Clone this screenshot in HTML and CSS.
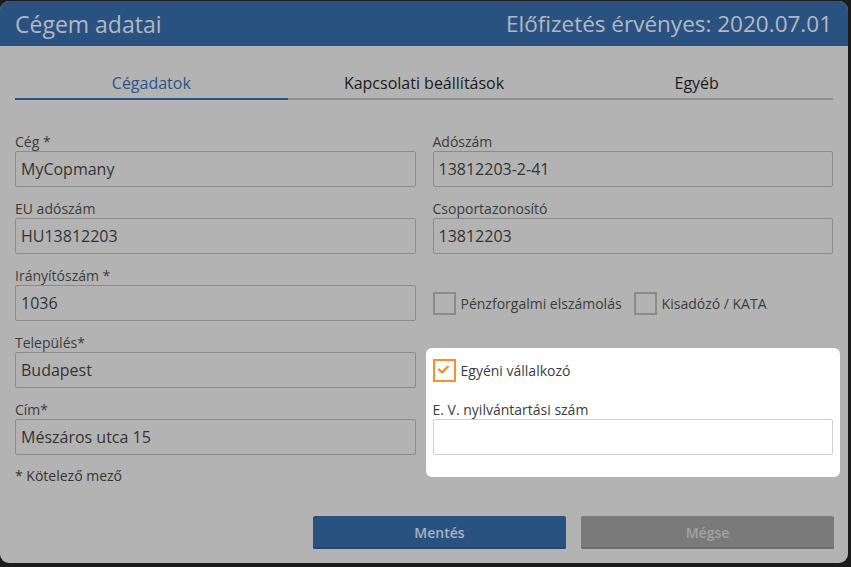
FILE: index.html
```html
<!DOCTYPE html>
<html lang="hu">
<head>
<meta charset="utf-8">
<title>Cégem adatai</title>
<link rel="stylesheet" href="styles.css">
</head>
<body>
<div class="dialog">
  <header class="dlg-head">
    <h1 class="title">Cégem adatai</h1>
    <div class="sub">Előfizetés érvényes: 2020.07.01</div>
  </header>
  <div class="dlg-body">
    <nav class="tabs">
      <div class="tab active">Cégadatok</div>
      <div class="tab">Kapcsolati beállítások</div>
      <div class="tab">Egyéb</div>
    </nav>
    <div class="form">
      <div class="col">
        <div class="field">
          <div class="label">Cég *</div>
          <div class="input">MyCopmany</div>
        </div>
        <div class="field">
          <div class="label">EU adószám</div>
          <div class="input">HU13812203</div>
        </div>
        <div class="field">
          <div class="label">Irányítószám *</div>
          <div class="input">1036</div>
        </div>
        <div class="field">
          <div class="label">Település*</div>
          <div class="input">Budapest</div>
        </div>
        <div class="field">
          <div class="label">Cím*</div>
          <div class="input">Mészáros utca 15</div>
        </div>
        <div class="note">* Kötelező mező</div>
      </div>
      <div class="col">
        <div class="field">
          <div class="label">Adószám</div>
          <div class="input">13812203-2-41</div>
        </div>
        <div class="field">
          <div class="label">Csoportazonosító</div>
          <div class="input">13812203</div>
        </div>
        <div class="field">
          <div class="label"></div>
          <div class="checkrow">
            <span class="cb"></span><span class="cb-text">Pénzforgalmi elszámolás</span>
            <span class="cb"></span><span class="cb-text">Kisadózó / KATA</span>
          </div>
        </div>
        <div class="panel">
          <div class="checkrow">
            <span class="cb checked"><svg viewBox="0 0 22 22" width="18" height="18"><path d="M5 10.5 L8.8 14 L15.5 7" fill="none" stroke="#f7912f" stroke-width="3" stroke-linecap="round" stroke-linejoin="round"/></svg></span><span class="cb-text">Egyéni vállalkozó</span>
          </div>
          <div class="field">
            <div class="label">E. V. nyilvántartási szám</div>
            <div class="input white"></div>
          </div>
        </div>
      </div>
    </div>
    <footer class="actions">
      <button class="btn primary">Mentés</button>
      <button class="btn secondary">Mégse</button>
    </footer>
  </div>
</div>
</body>
</html>
```

FILE: styles.css
```css
html, body {
  margin: 0;
  padding: 0;
  background: #1b1b1b;
  font-family: "Open Sans", "Noto Sans", sans-serif;
}
.dialog {
  width: 848px;
  height: 562px;
  margin-top: 1px;
  background: #b3b3b3;
  border-radius: 9px;
  overflow: hidden;
  display: flex;
  flex-direction: column;
}
.dlg-head {
  height: 45px;
  background: #2a5281;
  display: flex;
  align-items: center;
  justify-content: space-between;
  padding: 0 16px 0 15px;
  color: #b2b8c1;
}
.title {
  margin: 0;
  font-size: 23px;
  font-weight: 400;
}
.sub {
  font-size: 22.5px;
}
.dlg-body {
  padding: 0 15px 0 15px;
  display: flex;
  flex-direction: column;
}
.tabs {
  display: flex;
  width: 818px;
  margin-top: 27px;
  border-bottom: 2px solid #8e8e8e;
}
.tab {
  flex: 1;
  text-align: center;
  font-size: 16px;
  line-height: 20px;
  padding-bottom: 5px;
  color: #1c1c1c;
  margin-bottom: -2px;
  border-bottom: 2px solid transparent;
}
.tab.active {
  color: #2c5585;
  border-bottom-color: #2a5281;
}
.form {
  display: flex;
  gap: 17px;
  margin-top: 32px;
}
.col {
  width: 401px;
  display: flex;
  flex-direction: column;
}
.field {
  display: flex;
  flex-direction: column;
  margin-bottom: 12px;
}
.label {
  font-size: 14px;
  line-height: 19px;
  height: 19px;
  color: #3c3c3c;
}
.input {
  height: 34px;
  border: 1px solid #8b8b8b;
  border-radius: 2px;
  font-size: 16px;
  line-height: 34px;
  padding: 0 5px;
  color: #333;
}
.input.white {
  background: #fff;
  border-color: #cfcfcf;
}
.note {
  font-size: 14px;
  line-height: 18px;
  color: #333;
}
.checkrow {
  height: 36px;
  display: flex;
  align-items: center;
}
.cb {
  width: 19px;
  height: 19px;
  border: 2px solid #8b8b8b;
  display: flex;
  align-items: center;
  justify-content: center;
  flex: none;
}
.cb.checked {
  border-color: #f7912f;
  background: #fff;
}
.cb-text {
  font-size: 14px;
  color: #3c3c3c;
  margin-left: 5px;
  margin-right: 12px;
}
.panel {
  background: #fff;
  border-radius: 6px;
  margin: 15px -7px 0;
  padding: 4px 7px 10px;
}
.panel .field {
  margin-top: 12px;
}
.actions {
  display: flex;
  justify-content: flex-end;
  gap: 15px;
  width: 819px;
  margin-top: 31px;
}
.btn {
  width: 253px;
  height: 33px;
  border: none;
  border-radius: 2px;
  font-family: inherit;
  font-size: 14px;
  font-weight: 600;
  padding: 0;
}
.btn.primary {
  background: #2a5281;
  color: #a9b4c2;
  box-shadow: inset 0 -2px 0 #234670;
}
.btn.secondary {
  background: #7a7a7a;
  color: #a2a2a2;
  box-shadow: inset 0 -2px 0 #6c6c6c;
}
```
